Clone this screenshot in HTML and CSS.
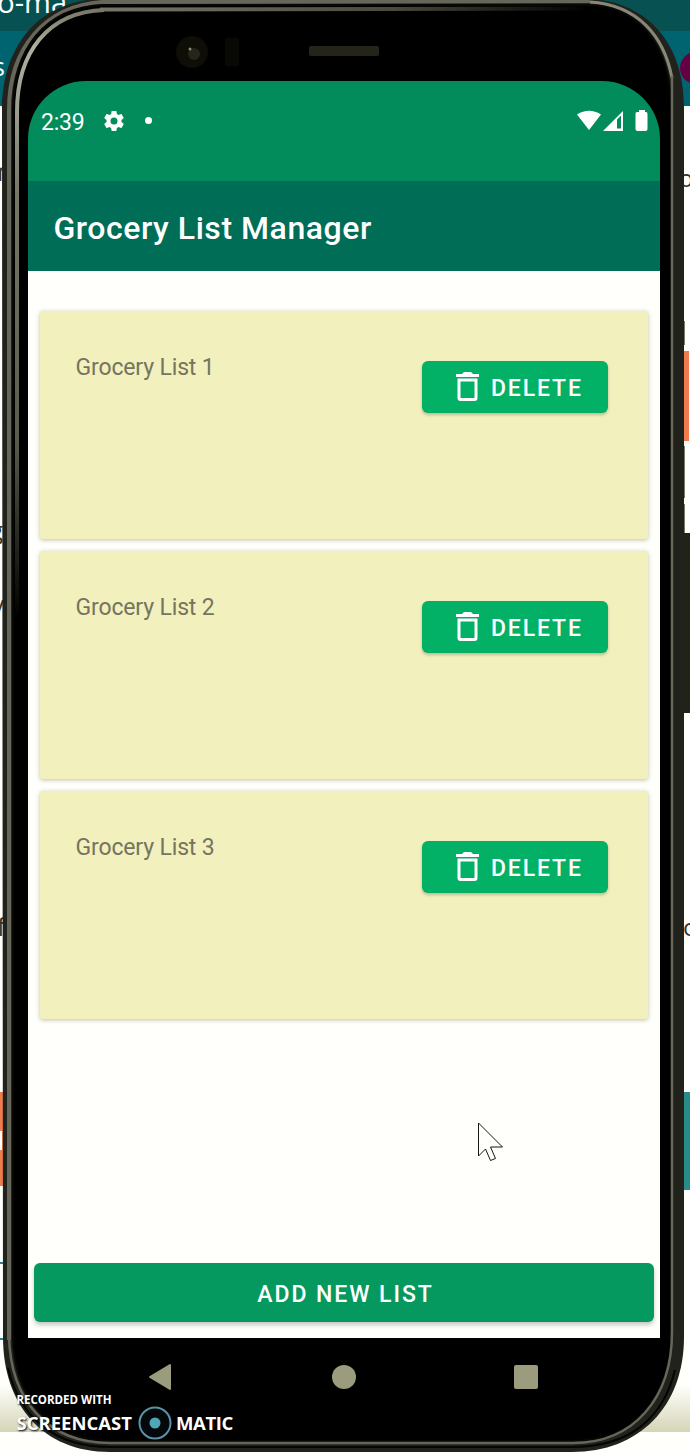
FILE: index.html
```
<!DOCTYPE html>
<html lang="en">
<head>
<meta charset="utf-8">
<title>Grocery List Manager</title>
<link rel="stylesheet" href="styles.css">
</head>
<body>
<main class="desktop">
  <svg class="backdrop" width="690" height="1452" viewBox="0 0 690 1452">
    <defs><linearGradient id="fade" x2="0" y2="1"><stop stop-color="#fffffb"/><stop offset="1" stop-color="#d5d5b8"/></linearGradient></defs>
    <path fill="#fffffb" d="M0 0h690v1452H0z"/>
    <path fill="#006470" d="M0 0h690v106H0z"/>
    <path fill="#075152" d="M0 0h690v31H0z"/>
    <circle cx="696" cy="68" r="16" fill="#650042"/>
    <path fill="url(#fade)" d="M0 1385h690v47H0z"/>
    <path fill="#ee7c4c" d="M0 1092h5v94H0zM682 351h7v90h-7z"/>
    <path fill="#fffffb" d="M0 1131h2v19H0z"/>
    <path fill="#268c85" d="M680 1092h10v98h-10z"/>
    <path fill="#222218" d="M680 533h10v180h-10z"/>
    <path fill="#77776a" d="M684 321h1v24h-1zM684 446h1v52h-1zM684 504h1v29h-1z"/>
    <path stroke="#387ba0" stroke-width="2" d="M0 1263h8M0 1339h8"/>
    <g class="page-text">
      <text x="-12" y="13" fill="#fff" font-size="29">-o-ma</text>
      <text x="-7" y="76" fill="#fff" font-size="25">s</text>
      <text x="-13" y="181" font-size="28">m</text>
      <text x="-13" y="414" font-size="28" font-weight="700">r</text>
      <text x="-10" y="539" font-size="24">g</text>
      <text x="-8" y="613" font-size="24">y</text>
      <text x="-3" y="936" font-size="25">f</text>
      <text x="679" y="187" font-size="24">o</text>
      <text x="683" y="936" font-size="24">o</text>
    </g>
  </svg>

  <svg class="shell" width="690" height="1452" viewBox="0 0 690 1452">
    <defs>
      <linearGradient id="rim" gradientUnits="userSpaceOnUse" x1="0" y1="10" x2="0" y2="620"><stop stop-color="#77776a"/><stop offset=".06" stop-color="#b0b0a0"/><stop offset=".15" stop-color="#a0a090"/><stop offset=".3" stop-color="#777769"/><stop offset=".7" stop-color="#5c5c4e"/><stop offset="1" stop-color="#000"/></linearGradient>
      <linearGradient id="toprim" gradientUnits="userSpaceOnUse" x1="100" y1="0" x2="590" y2="0"><stop stop-color="#77776a"/><stop offset=".6" stop-color="#4a4a3e"/><stop offset="1" stop-color="#000"/></linearGradient>
    </defs>
    <path fill="#22221c" d="M2 110C2 45 40-1 104-1h481c61 0 99 44 99 107v1231c0 70-45 115-112 115H110c-67 0-107-47-107-115z"/>
    <path fill="none" stroke="#66665a" stroke-width="4" d="M9 1340V110C9 48 45 6 102 2L590 1"/>
    <path fill="none" stroke="#88887a" stroke-width="3" d="M590 2c48 3 74 34 82 76"/>
    <path fill="#000" stroke="#070704" stroke-width="2" d="M13 110C13 50 44 7 104 5h481c56 0 86 42 86 104v1225c0 66-38 107-99 107H110c-60 0-97-43-97-107z"/>
    <path fill="none" stroke="url(#toprim)" stroke-width="4" d="M100 9.500L590 8.500"/>
    <path fill="none" stroke="url(#rim)" stroke-width="4" d="M17 620V112C17 52 48 12 104 10"/>
    <path fill="none" stroke="#66665a" stroke-width="2.500" d="M672 76v1256c0 66-38 111-99 111H110c-63 0-100-43-101-108"/>
    <path fill="none" stroke="#050504" stroke-width="2" d="M8 1368c12 51 48 79 102 79h462c57 0 91-28 103-77"/>
    <rect x="309" y="46" width="70" height="10" rx="2" fill="#24241b"/>
    <circle cx="192" cy="52" r="16" fill="#0e0e06"/>
    <circle cx="194" cy="54" r="6" fill="#25251b"/>
    <circle cx="190" cy="49" r="1.500" fill="#888878"/>
    <path fill="#080804" d="M225 38h14v28h-14z"/>
  </svg>

  <section class="screen">
    <div class="status">
      <span class="clock">2:39</span>
      <svg class="gear" width="24" height="24" viewBox="0 0 24 24"><path d="M19.43 12.98c.04-.32.07-.64.07-.98s-.03-.66-.07-.98l2.11-1.65c.19-.15.24-.42.12-.64l-2-3.46c-.12-.22-.39-.3-.61-.22l-2.49 1c-.52-.4-1.08-.73-1.69-.98l-.38-2.65C14.46 2.18 14.25 2 14 2h-4c-.25 0-.46.18-.49.42l-.38 2.65c-.61.25-1.17.59-1.69.98l-2.49-1c-.23-.09-.49 0-.61.22l-2 3.46c-.13.22-.07.49.12.64l2.11 1.65c-.04.32-.07.65-.07.98s.03.66.07.98l-2.11 1.65c-.19.15-.24.42-.12.64l2 3.46c.12.22.39.3.61.22l2.49-1c.52.4 1.08.73 1.69.98l.38 2.65c.03.24.24.42.49.42h4c.25 0 .46-.18.49-.42l.38-2.65c.61-.25 1.17-.59 1.69-.98l2.49 1c.23.09.49 0 .61-.22l2-3.46c.12-.22.07-.49-.12-.64zM12 15.500a3.500 3.500 0 1 1 0-7 3.500 3.500 0 0 1 0 7z"/></svg>
      <i class="dot"></i>
      <svg class="signals" width="71" height="22" viewBox="0 0 71 22"><path d="M0 4.500Q12 -3 24 4.500L12 20z"/><path fill-rule="evenodd" d="M26 21L46 1v20zM40 9.500v9h4V5.500z"/><path d="M60 2h2V0h6v2h1q1.500 0 1.500 2v15q0 2-2 2h-8q-2 0-2-2V4q0-2 1.500-2z"/></svg>
    </div>
    <header class="appbar"><h1>Grocery List Manager</h1></header>
    <div class="lists">
      <article class="card"><span>Grocery List 1</span><button class="delete"><svg class="trash" width="23" height="30" viewBox="0 0 23 30"><path fill-rule="evenodd" d="M0 2h6l2-2h7l2 2h6v3H0zM1.500 6.500h20v19.500q0 3-3 3h-14q-3 0-3-3zM4.500 9.500v16.500h14V9.500z"/></svg>DELETE</button></article>
      <article class="card"><span>Grocery List 2</span><button class="delete"><svg class="trash" width="23" height="30" viewBox="0 0 23 30"><path fill-rule="evenodd" d="M0 2h6l2-2h7l2 2h6v3H0zM1.500 6.500h20v19.500q0 3-3 3h-14q-3 0-3-3zM4.500 9.500v16.500h14V9.500z"/></svg>DELETE</button></article>
      <article class="card"><span>Grocery List 3</span><button class="delete"><svg class="trash" width="23" height="30" viewBox="0 0 23 30"><path fill-rule="evenodd" d="M0 2h6l2-2h7l2 2h6v3H0zM1.500 6.500h20v19.500q0 3-3 3h-14q-3 0-3-3zM4.500 9.500v16.500h14V9.500z"/></svg>DELETE</button></article>
    </div>
    <div class="footer"><button class="add">ADD NEW LIST</button></div>
    <nav class="nav"><svg width="632" height="76" viewBox="0 0 632 76"><path stroke-width="2" stroke-linejoin="round" d="M122 39l20-12v24z"/><circle cx="316" cy="39" r="12"/><rect x="486" y="27" width="24" height="24" rx="2"/></svg></nav>
  </section>

  <svg class="cursor" width="28" height="42" viewBox="0 0 28 42"><path d="M1.500 1v33l7-7 5 11.500 5-2-5-11.500h12z"/></svg>

  <aside class="watermark">
    <span class="recorded">RECORDED WITH</span>
    <div class="brand"><span class="screencast">SCREENCAST</span><svg width="34" height="34" viewBox="0 0 34 34"><circle cx="17" cy="17" r="15.500" fill="#05080a" stroke="#5b92a8" stroke-width="2"/><circle cx="17" cy="17" r="5.500" fill="#4fa6b8"/></svg><span class="matic">MATIC</span></div>
  </aside>
</main>
</body>
</html>
```
FILE: styles.css
```
* { box-sizing: border-box; }
body { margin: 0; font-family: Roboto, sans-serif; }
.desktop { position: relative; width: 690px; height: 1452px; overflow: hidden; padding: 81px 30px 0 28px; }
.backdrop, .shell { position: absolute; left: 0; top: 0; }
.page-text { font-family: "Open Sans", sans-serif; fill: #36362b; }
.screen { position: relative; width: 632px; height: 1333px; display: flex; flex-direction: column; overflow: hidden; border-radius: 58px 58px 50px 50px; }
.status { height: 100px; flex: none; background: #028b5b; color: #fff; display: flex; align-items: flex-start; padding: 28px 12px 0 13px; }
.clock { font-size: 23px; line-height: 26px; width: 61px; padding-top: 1px; letter-spacing: -.2px; }
.gear { fill: #fff; }
.dot { width: 7px; height: 7px; border-radius: 50%; background: #fff; margin: 8px 0 0 19px; }
.signals { fill: #fff; margin: 1px 0 0 auto; }
.appbar { height: 90px; flex: none; background: #006d57; color: #fff; display: flex; align-items: center; padding: 3px 25.5px 0; }
.appbar h1 { margin: 0; font-size: 32px; font-weight: 500; letter-spacing: .55px; white-space: nowrap; }
.lists { padding: 40px 12px 0; display: flex; flex-direction: column; gap: 12px; height: 992px; flex: none; background: #fffffb; }
.card { height: 228px; flex: none; background: #f2f0bd; border-radius: 3px; box-shadow: 0 1px 4px #88885a88; display: flex; justify-content: space-between; align-items: flex-start; padding: 43px 40px 0 35.5px; color: #75755f; font-size: 23px; line-height: 27px; letter-spacing: -.15px; }
button { font-family: Roboto, sans-serif; border: 0; color: #fff; font-weight: 500; font-size: 23px; }
.delete { width: 186px; height: 52px; margin-top: 7px; padding: 2px 0 0 33.5px; display: flex; align-items: center; gap: 12.5px; border-radius: 6px; background: #02b066; letter-spacing: 1.85px; box-shadow: 0 2px 3px #55554655; }
.trash { fill: #fff; position: relative; top: -1px; }
.footer { height: 75px; flex: none; padding: 0 6px; background: #fffffb; display: flex; align-items: flex-start; }
.add { flex: 1; height: 59px; padding: 3px 0 0 3px; border-radius: 6px; background: #05995f; letter-spacing: 1.95px; box-shadow: 0 3px 4px #5555; }
.nav { height: 76px; flex: none; background: #000; fill: #9b9b7d; stroke: none; }
.nav path { stroke: #9b9b7d; }
.cursor { position: absolute; left: 477px; top: 1122px; fill: #fffffb; stroke: #171711; stroke-width: 1; }
.watermark { position: absolute; left: 16.5px; top: 1393px; color: #fff; font-family: "Open Sans", sans-serif; font-weight: 700; text-shadow: 1px 1px 2px #000; white-space: nowrap; }
.recorded { display: block; font-size: 11.5px; line-height: 14px; letter-spacing: 0; }
.brand { display: flex; align-items: center; font-size: 18.5px; line-height: 34px; gap: 5px; margin-top: -1px; }
.brand svg { flex: none; }
.screencast { width: 116.5px; }
.matic { margin-left: -1px; letter-spacing: -.4px; }
```
